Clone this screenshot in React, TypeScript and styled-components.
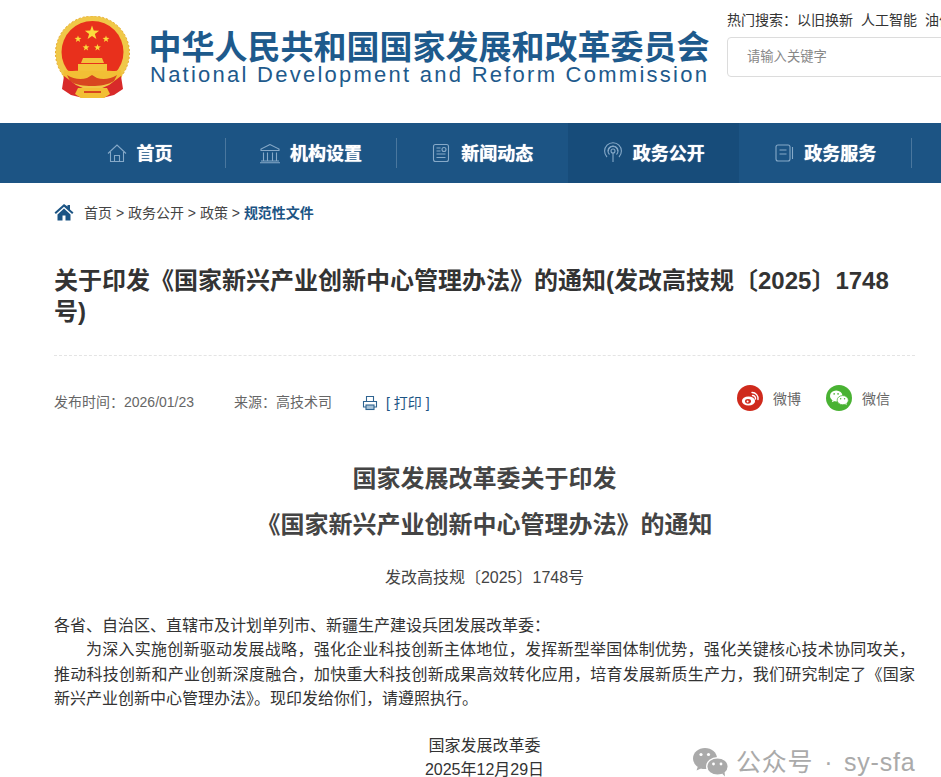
import React from 'react';
import styled, { createGlobalStyle } from 'styled-components';

const COMMA = '\uFF0C';
const COLON = '\uFF1A';
const STOP = '\u3002';

const Global = createGlobalStyle`
  html, body { margin: 0; padding: 0; background: #fff; }
  body { width: 941px; height: 777px; overflow: hidden; font-family: "Liberation Sans", "Noto Sans CJK SC", sans-serif; color: #333; }
  * { box-sizing: border-box; }
`;

const Page = styled.div`
  position: relative;
  width: 941px;
  height: 777px;
  overflow: hidden;
`;

const Header = styled.header`
  display: flex;
  height: 123px;
  padding-left: 55px;
`;

const Brand = styled.div`
  display: flex;
  width: 672px;
  flex-shrink: 0;
  gap: 20px;
  padding-top: 16px;
`;

const BrandText = styled.div`
  display: flex;
  flex-direction: column;
  padding-top: 17px;
  color: #1e5a8c;
  white-space: nowrap;
`;

const BrandCn = styled.div`
  font-size: 33px;
  line-height: 30px;
  font-weight: 700;
  margin-left: -1.5px;
`;

const BrandEn = styled.div`
  font-size: 22px;
  line-height: 24px;
  letter-spacing: 2.25px;
`;

const SearchCol = styled.div`
  display: flex;
  flex-direction: column;
  width: 214px;
  flex-shrink: 0;
  padding-top: 11px;
  overflow: hidden;
`;

const Hot = styled.div`
  display: flex;
  gap: 8px;
  font-size: 14px;
  line-height: 18px;
  color: #333;
  white-space: nowrap;
`;

const SearchBox = styled.div`
  display: flex;
  align-items: center;
  width: 300px;
  height: 40px;
  margin-top: 8px;
  padding: 0 0 4px 19px;
  border: 1px solid #dcdcdc;
  border-radius: 4px;
  font-size: 13.3px;
  color: #888;
`;

const Nav = styled.nav`
  display: grid;
  grid-template-columns: repeat(5, 171.4px);
  height: 60px;
  padding-left: 53.4px;
  background: #1c5484;
`;

const NavItem = styled.a<{ $active?: boolean }>`
  position: relative;
  display: flex;
  align-items: center;
  justify-content: center;
  gap: 9px;
  font-size: 18px;
  font-weight: 700;
  color: #fff;
  text-shadow: 0 0 1px #fff;
  background: ${(p) => (p.$active ? '#174c7a' : 'transparent')};
  &::after {
    content: '';
    position: absolute;
    right: -1.2px;
    top: 15px;
    height: 30px;
    width: 1px;
    background: #4a779e;
    display: ${(p) => (p.$active ? 'none' : 'block')};
  }
`;

const NavLabel = styled.span`
  margin-top: -2px;
`;

const NavIcon = styled.svg`
  width: 22px;
  height: 22px;
  fill: none;
  stroke: #86a9c8;
  stroke-width: 1.1;
  flex-shrink: 0;
`;

const Content = styled.main`
  padding: 0 26px 0 54px;
`;

const Crumbs = styled.div`
  display: flex;
  align-items: center;
  height: 58px;
  font-size: 14px;
  color: #444;
  white-space: pre;
`;

const CrumbIcon = styled.svg`
  width: 20px;
  height: 18px;
  margin-right: 10px;
  fill: #1c5484;
`;

const CrumbCurrent = styled.span`
  font-weight: 700;
  color: #1c5484;
`;

const Title = styled.h1`
  margin: 24px 0 0;
  padding-bottom: 28px;
  font-size: 24px;
  line-height: 31px;
  font-weight: 700;
  color: #333;
  border-bottom: 1px dashed #e4e4e4;
`;

const Meta = styled.div`
  display: flex;
  align-items: center;
  height: 30px;
  margin-top: 30px;
  font-size: 14px;
  color: #666;
  white-space: nowrap;
`;

const MetaItem = styled.span`
  margin-right: 40px;
`;

const MetaSource = styled.span`
  margin-right: 30px;
`;

const PrintIcon = styled.svg`
  width: 16px;
  height: 16px;
  margin: 3px 8px 0 0;
  fill: none;
  stroke: #2f6491;
  stroke-width: 1.1;
`;

const PrintLink = styled.span`
  color: #1c5484;
  padding-top: 1px;
`;

const Share = styled.div`
  display: flex;
  align-items: center;
  gap: 25px;
  margin-left: auto;
  margin-right: 25px;
  margin-top: -6px;
`;

const ShareItem = styled.span`
  display: flex;
  align-items: center;
  gap: 10px;
  font-size: 14px;
  color: #666;
`;

const ShareIcon = styled.svg`
  width: 26px;
  height: 26px;
`;

const Heading = styled.div`
  margin-top: 40px;
  text-align: center;
  font-size: 24px;
  line-height: 46px;
  font-weight: 700;
  color: #444;
`;

const DocNo = styled.div`
  margin-top: 18px;
  text-align: center;
  font-size: 16px;
  line-height: 24px;
  color: #444;
`;

const Body = styled.div`
  margin-top: 24px;
  font-size: 16px;
  line-height: 24.4px;
  color: #333;
  text-align: justify;
`;

const Indented = styled.p`
  margin: 0;
  text-indent: 2em;
`;

const Plain = styled.p`
  margin: 0;
`;

const Sign = styled.div`
  margin-top: 22px;
  text-align: center;
  font-size: 16px;
  line-height: 24px;
  color: #333;
  white-space: nowrap;
`;

const Watermark = styled.div`
  position: absolute;
  left: 693px;
  top: 746px;
  display: flex;
  align-items: center;
  gap: 7px;
  font-size: 25px;
  letter-spacing: 0.8px;
  word-spacing: 3px;
  line-height: 32px;
  color: #aaa;
  white-space: nowrap;
`;

const WatermarkIcon = styled.svg`
  width: 36px;
  height: 30px;
`;

const star = (cx: number, cy: number, r: number) =>
  Array.from({ length: 10 }, (_, i) => {
    const a = -Math.PI / 2 + (i * Math.PI) / 5;
    const rr = i % 2 ? r * 0.4 : r;
    return `${(cx + rr * Math.cos(a)).toFixed(2)},${(cy + rr * Math.sin(a)).toFixed(2)}`;
  }).join(' ');

const Emblem = () => (
  <svg width="75" height="83" viewBox="5 6 75 83" style={{ flexShrink: 0 }}>
    <circle cx="42.5" cy="43" r="37" fill="#f0c848" />
    <circle cx="42.5" cy="43" r="37" fill="none" stroke="#e6a92a" strokeWidth="1" strokeDasharray="2 2" />
    <circle cx="42.5" cy="42" r="31" fill="#e8301c" />
    <polygon points={star(42, 23, 7.5)} fill="#fbdc3c" />
    <polygon points={star(28, 29, 3.6)} fill="#fbdc3c" />
    <polygon points={star(56, 29, 3.6)} fill="#fbdc3c" />
    <polygon points={star(36, 37.5, 3.6)} fill="#fbdc3c" />
    <polygon points={star(47.5, 37.5, 3.6)} fill="#fbdc3c" />
    <path d="M33 48h19l2 5H31z" fill="#f3c23a" />
    <path d="M28 54h29v7H28z" fill="#f3c23a" />
    <path d="M14 60c8 2 14 0 20 1h17c6-1 12 1 20-1l1 7c-6 6-18 7-30 7s-22-1-29-7z" fill="#f2bf35" />
    <path d="M17 65c6 4 14 5 20 3l5-3 5 3c6 2 14 1 20-3l-3 6c-6 4-14 5-22 5s-17-1-22-5z" fill="#d8461f" />
    <path d="M14 66l12 9 9 4-2 9-12-3-9-6z" fill="#d82a2a" />
    <path d="M71 66l-12 9-9 4 2 9 12-3 9-6z" fill="#d82a2a" />
    <path d="M28 78h29l3 6-6 4H31l-6-4z" fill="#f2bf35" />
    <path d="M34 81h17v2H34z" fill="#d8461f" />
  </svg>
);

const Bubbles = ({ fill, eye }: { fill: string; eye: string }) => (
  <>
    <ellipse cx="12" cy="11.5" rx="12" ry="10.5" fill={fill} />
    <path d="M5 19l-1.5 4.5L9 21z" fill={fill} />
    <circle cx="8" cy="7.5" r="1.6" fill={eye} />
    <circle cx="15.5" cy="7.5" r="1.6" fill={eye} />
    <ellipse cx="24.5" cy="19.5" rx="10.8" ry="8.8" fill={fill} stroke={eye} strokeWidth="1.4" />
    <path d="M29 26.5l3 3-.5-4.5z" fill={fill} />
    <circle cx="20.5" cy="17" r="1.4" fill={eye} />
    <circle cx="28" cy="17" r="1.4" fill={eye} />
  </>
);

const navItems: { label: string; active?: boolean; icon: React.ReactNode }[] = [
  {
    label: '首页',
    icon: <path d="M2 11.5L11 3l9 8.5M4.5 10v9.5h13V10M8.5 19.5v-6h5v6" />,
  },
  {
    label: '机构设置',
    icon: <path d="M11 2.5L2 7v1.5h18V7zM4.5 10.5v8M8.5 10.5v8M13.5 10.5v8M17.5 10.5v8M2 19h18M1 20.8h20" />,
  },
  {
    label: '新闻动态',
    icon: (
      <>
        <rect x="3.5" y="2.5" width="15" height="17" rx="2" />
        <path d="M6.5 6h4M6.5 9h4M6.5 12h9M6.5 15.5h9" />
        <circle cx="14" cy="7.5" r="2" />
      </>
    ),
  },
  {
    label: '政务公开',
    active: true,
    icon: (
      <>
        <circle cx="11" cy="9" r="2" />
        <path d="M11 11v9M7.5 12.5a5 5 0 1 1 7 0M5 15a8.4 8.4 0 1 1 12 0" />
        <path d="M6.2 9.2a4.8 4.8 0 0 1 9.6 0" />
      </>
    ),
  },
  {
    label: '政务服务',
    icon: (
      <>
        <rect x="3" y="3" width="14" height="16" rx="2" />
        <path d="M6.5 8h7M6.5 12h7M19.5 5v12" />
      </>
    ),
  },
];

const notice = [
  '为深入实施创新驱动发展战略',
  '强化企业科技创新主体地位',
  '发挥新型举国体制优势',
  '强化关键核心技术协同攻关',
  '推动科技创新和产业创新深度融合',
  '加快重大科技创新成果高效转化应用',
  '培育发展新质生产力',
  '我们研究制定了《国家新兴产业创新中心管理办法》' + STOP + '现印发给你们',
  '请遵照执行' + STOP,
].join(COMMA);

export default function App() {
  return (
    <Page>
      <Global />
      <Header>
        <Brand>
          <Emblem />
          <BrandText>
            <BrandCn>中华人民共和国国家发展和改革委员会</BrandCn>
            <BrandEn>National Development and Reform Commission</BrandEn>
          </BrandText>
        </Brand>
        <SearchCol>
          <Hot>
            <span>{'热门搜索' + COLON + '以旧换新'}</span>
            <span>人工智能</span>
            <span>油价</span>
          </Hot>
          <SearchBox>请输入关键字</SearchBox>
        </SearchCol>
      </Header>
      <Nav>
        {navItems.map((n) => (
          <NavItem key={n.label} $active={n.active}>
            <NavIcon viewBox="0 0 22 22">{n.icon}</NavIcon>
            <NavLabel>{n.label}</NavLabel>
          </NavItem>
        ))}
      </Nav>
      <Content>
        <Crumbs>
          <CrumbIcon viewBox="0 0 20 18">
            <path d="M10 1L0.5 9.5l1.4 1.4L10 3.8l8.1 7.1 1.4-1.4-3.5-3V2h-2.5v1.4zM3.5 11.4V17.5h5v-5h3v5h5v-6.1L10 5.6z" />
          </CrumbIcon>
          首页 &gt; 政务公开 &gt; 政策 &gt; <CrumbCurrent>规范性文件</CrumbCurrent>
        </Crumbs>
        <Title>关于印发《国家新兴产业创新中心管理办法》的通知(发改高技规〔2025〕1748号)</Title>
        <Meta>
          <MetaItem>{'发布时间' + COLON + '2026/01/23'}</MetaItem>
          <MetaSource>{'来源' + COLON + '高技术司'}</MetaSource>
          <PrintIcon viewBox="0 0 16 16">
            <path d="M4.5 6V1.5h7V6M4 12H1.5V6.5h13V12H12" />
            <rect x="4" y="10" width="8" height="4.5" fill="#a9c3d8" />
          </PrintIcon>
          <PrintLink>[ 打印 ]</PrintLink>
          <Share>
            <ShareItem>
              <ShareIcon viewBox="0 0 26 26">
                <circle cx="13" cy="13" r="13" fill="#cf2a1c" />
                <ellipse cx="11.5" cy="16" rx="6.6" ry="4.6" fill="#fff" />
                <ellipse cx="11" cy="16.3" rx="3" ry="2.4" fill="#cf2a1c" />
                <circle cx="10.6" cy="16.5" r="1" fill="#fff" />
                <path d="M15 7.5a6 6 0 0 1 6 7M15.5 10.5a3 3 0 0 1 3 3.5" fill="none" stroke="#fff" strokeWidth="1.4" strokeLinecap="round" />
              </ShareIcon>
              微博
            </ShareItem>
            <ShareItem>
              <ShareIcon viewBox="0 0 26 26">
                <circle cx="13" cy="13" r="13" fill="#49b233" />
                <g transform="translate(4 5) scale(0.52)">
                  <Bubbles fill="#fff" eye="#49b233" />
                </g>
              </ShareIcon>
              微信
            </ShareItem>
          </Share>
        </Meta>
        <Heading>
          国家发展改革委关于印发
          <br />
          《国家新兴产业创新中心管理办法》的通知
        </Heading>
        <DocNo>发改高技规〔2025〕1748号</DocNo>
        <Body>
          <Plain>{'各省、自治区、直辖市及计划单列市、新疆生产建设兵团发展改革委' + COLON}</Plain>
          <Indented>{notice}</Indented>
        </Body>
        <Sign>
          国家发展改革委
          <br />
          2025年12月29日
        </Sign>
      </Content>
      <Watermark>
        <WatermarkIcon viewBox="0 0 36 30">
          <Bubbles fill="#aaa" eye="#fff" />
        </WatermarkIcon>
        <span>公众号 · sy-sfa</span>
      </Watermark>
    </Page>
  );
}
